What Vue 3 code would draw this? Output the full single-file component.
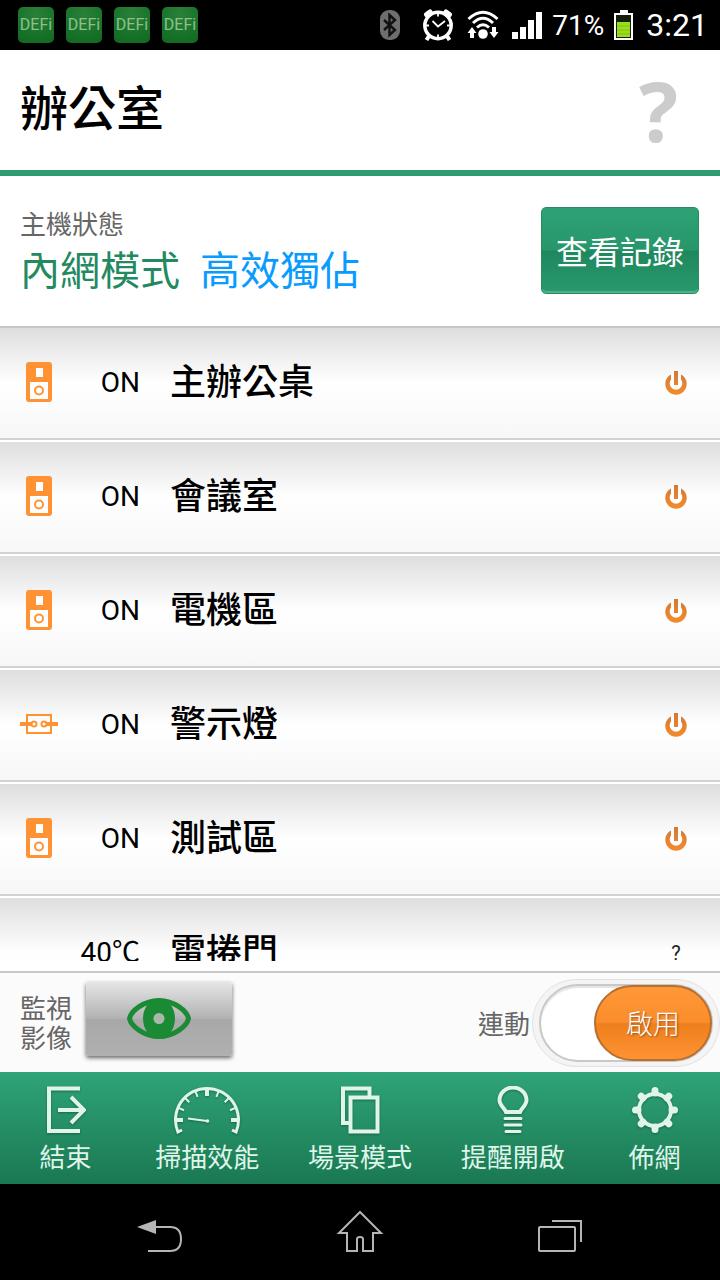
<template>
  <div class="screen">
    <div class="status-bar">
      <div class="notifications">
        <span v-for="n in 4" :key="n" class="app-badge">DEFi</span>
      </div>
      <div class="indicators">
        <svg class="bluetooth" width="20" height="30" viewBox="0 0 20 30">
          <rect width="20" height="30" rx="9" fill="#6e6e6e"/>
          <path d="M4 10L15 20 9.500 25V5L15 10 4 20" fill="none" stroke="#111" stroke-width="2.400"/>
        </svg>
        <svg class="alarm" width="32" height="32" viewBox="0 0 32 32">
          <g fill="none" stroke="#fff">
            <circle cx="16" cy="16.500" r="13.200" stroke-width="3.500"/>
            <path d="M4.500 5.500L8 3M24 3L27.500 5.500" stroke-width="5" stroke-linecap="round"/>
            <path d="M7 27L4.500 31M25 27L27.500 31" stroke-width="4"/>
            <path d="M10.500 12L16 17.500 23 12M16 3V7.500M16 25.500V29M3 16.500H7M25 16.500H29" stroke-width="1.800"/>
          </g>
        </svg>
        <svg class="wifi" width="32" height="30" viewBox="0 0 32 30">
          <g fill="none" stroke="#fff" stroke-width="3">
            <path d="M1.500 9Q16 -4.500 30.500 9"/>
            <path d="M6 13Q16 3.500 26 13"/>
            <path d="M10 17.500Q16 12 22 17.500"/>
          </g>
          <circle cx="16" cy="24" r="4.800" fill="#fff"/>
          <path d="M5 17L9.500 23H7V28H3V23H.5ZM27 28L22.500 22H25V17H29V22H31.500Z" fill="#fff"/>
        </svg>
        <svg class="signal" width="30" height="28" viewBox="0 0 30 28">
          <path d="M0 21H6V28H0ZM8 16H14V28H8ZM16 9H22V28H16ZM24 1H30V28H24Z" fill="#fff"/>
        </svg>
        <span class="percent">71%</span>
        <svg class="battery" width="20" height="30" viewBox="0 0 20 30">
          <path d="M6 0H14V3H19V30H0V3H6Z" fill="#fff"/>
          <rect x="2" y="5" width="15" height="23" fill="#15200a"/>
          <rect x="3" y="12" width="13" height="15" fill="#9bdc1c"/>
          <path d="M3 16H16M3 20H16M3 24H16" stroke="#84bd18"/>
        </svg>
        <span class="clock">3:21</span>
      </div>
    </div>

    <header class="title-bar">
      <h1>辦公室</h1>
      <button type="button" class="help">?</button>
    </header>

    <section class="host">
      <div class="host-info">
        <p class="host-label">主機狀態</p>
        <p class="host-modes">
          <span class="mode-network">內網模式</span>
          <span class="mode-power">高效獨佔</span>
        </p>
      </div>
      <button type="button" class="log-button">查看記錄</button>
    </section>

    <ul class="devices">
      <li v-for="device in devices" :key="device.name" class="device">
        <span class="device-icon">
          <svg v-if="device.type === 'outlet'" width="38" height="42" viewBox="0 0 38 42">
            <rect x="6" width="26" height="40" rx="3" fill="#ff9233"/>
            <path d="M16 6H23V15H16ZM10 20H28V37H10Z" fill="#fff"/>
            <circle cx="19" cy="28.500" r="4" fill="none" stroke="#ff9233" stroke-width="2"/>
          </svg>
          <svg v-else-if="device.type === 'relay'" width="38" height="42" viewBox="0 0 38 42">
            <g fill="none" stroke="#ff9233" stroke-width="2">
              <rect x="7" y="11" width="24" height="18"/>
              <circle cx="14" cy="20" r="2.500"/>
              <circle cx="24" cy="20" r="2.500"/>
              <path d="M0 20H12M26 20H38" stroke-width="4"/>
            </g>
          </svg>
        </span>
        <span class="device-state">{{ device.state }}</span>
        <span class="device-name">{{ device.name }}</span>
        <button type="button" class="power" :aria-label="device.type ? device.name : null">
          <svg v-if="device.type" width="22" height="24" viewBox="0 0 22 24">
            <defs>
              <linearGradient id="power-fill" x1="0" y1="0" x2="0" y2="1">
                <stop offset="0" stop-color="#d07a35"/>
                <stop offset="1" stop-color="#f58a2c"/>
              </linearGradient>
            </defs>
            <path
                d="M6 3.500A10.700 10.700 0 1 0 16 3.500V8.500A6.300 6.300 0 1 1 6 8.500ZM9 0H13V14H9Z"
                fill="url(#power-fill)"/>
          </svg>
          <template v-else>?</template>
        </button>
      </li>
    </ul>

    <section class="controls">
      <span id="camera-label" class="camera-label">監視<br>影像</span>
      <button type="button" class="camera-button" aria-labelledby="camera-label">
        <svg width="64" height="42" viewBox="0 0 64 42">
          <path
              d="M2.500 20.500C4 13 17 2.500 32 2.500S60 13 61.500 20.500C60 28 47 38.500 32 38.500S4 28 2.500 20.500Z"
              fill="none"
              stroke="#1a8a35"
              stroke-width="5"/>
          <ellipse cx="32" cy="20.500" rx="16" ry="20" fill="#1a8a35"/>
          <circle cx="32" cy="20.500" r="5.500" fill="#a9b8ab"/>
        </svg>
      </button>
      <label class="link-switch">
        <span>連動</span>
        <span class="track" :class="{ on: linked }">
          <input v-model="linked" type="checkbox">
          <span class="thumb">啟用</span>
        </span>
      </label>
    </section>

    <nav class="tabs">
      <button type="button" class="tab">
        <svg width="42" height="48" viewBox="0 0 42 48">
          <path d="M36 2.500H5V45H36M14 24H40M27 11L40 24 27 37" stroke-width="4"/>
        </svg>
        <span>結束</span>
      </button>
      <button type="button" class="tab">
        <svg width="68" height="48" viewBox="0 0 68 48">
          <path d="M9 44L4.900 46A31.500 31.500 0 1 1 63.100 46L59 44"/>
          <path
              v-for="tick in ticks"
              :key="tick.angle"
              :d="tick.major ? 'M34 3V10' : 'M34 3V9'"
              :transform="`rotate(${tick.angle} 34 34)`"
              :stroke-width="tick.major ? 4 : 2"/>
          <path d="M15 32.500L34 35" stroke-width="2"/>
          <circle cx="34.500" cy="35" r="1.800" fill="#dff5ea" stroke="none"/>
        </svg>
        <span>掃描效能</span>
      </button>
      <button type="button" class="tab">
        <svg width="40" height="48" viewBox="0 0 40 48">
          <path d="M10 37H3V2.500H29.500V10M10.500 11.500H37.500V45.500H10.500Z" stroke-width="4"/>
        </svg>
        <span>場景模式</span>
      </button>
      <button type="button" class="tab">
        <svg width="32" height="48" viewBox="0 0 32 48">
          <path d="M9 26H23C24.500 22 29.500 19.500 29.500 14A13.500 12.500 0 0 0 2.500 14C2.500 19.500 7.500 22 9 26Z" stroke-width="4"/>
          <path d="M8 32.500H24M8 39H24M9 45.500H23" stroke-linecap="round"/>
        </svg>
        <span>提醒開啟</span>
      </button>
      <button type="button" class="tab">
        <svg width="48" height="48" viewBox="0 0 48 48">
          <circle cx="24" cy="24" r="16" stroke-width="4"/>
          <path
              v-for="n in 8"
              :key="n"
              d="M24 7V4.500"
              stroke-width="7"
              stroke-linecap="round"
              :transform="`rotate(${n * 45} 24 24)`"/>
        </svg>
        <span>佈網</span>
      </button>
    </nav>

    <nav class="system-nav">
      <button type="button" aria-label="返回">
        <svg width="48" height="48" viewBox="0 0 48 48">
          <path d="M1 19L20 12V26Z" fill="#b5b5b5" stroke="none"/>
          <path d="M19 19H34Q45 19 45 31T34 43H12"/>
        </svg>
      </button>
      <button type="button" aria-label="主畫面">
        <svg width="48" height="48" viewBox="0 0 48 48">
          <path d="M24 4L45 25H37V43H27V31Q27 29 24 29T21 31V43H11V25H3Z"/>
        </svg>
      </button>
      <button type="button" aria-label="最近使用">
        <svg width="48" height="48" viewBox="0 0 48 48">
          <rect x="3" y="19" width="36" height="24" rx="1"/>
          <path d="M16 13H45V34"/>
        </svg>
      </button>
    </nav>
  </div>
</template>


<script setup>

import { ref } from 'vue';

const linked = ref(true);

const devices = [
  { type: 'outlet', state: 'ON', name: '主辦公桌' },
  { type: 'outlet', state: 'ON', name: '會議室' },
  { type: 'outlet', state: 'ON', name: '電機區' },
  { type: 'relay', state: 'ON', name: '警示燈' },
  { type: 'outlet', state: 'ON', name: '測試區' },
  { type: null, state: '40℃', name: '電捲門' }
];

// gauge marks, in degrees from the top
const ticks = [-90, -67, -45, -22, 0, 22, 45, 67, 90].map((angle) => ({
  angle,
  major: angle % 90 === 0
}));

</script>

<style>

body {
  margin: 0;
  background: #000;
}

</style>

<style scoped>

.screen {
  display: flex;
  flex-direction: column;
  height: 100vh;
  background: #fff;
  color: #000;
  font-family: "Roboto", "Noto Sans CJK TC", sans-serif;
}

button {
  margin: 0;
  padding: 0;
  border: 0;
  background: none;
  font-family: inherit;
  cursor: pointer;
}

svg {
  display: block;
  flex: none;
}

h1, p, ul {
  margin: 0;
  padding: 0;
}

.status-bar {
  display: flex;
  justify-content: space-between;
  align-items: center;
  flex: none;
  height: 50px;
  padding: 0 12px 0 18px;
  background: #000;
  color: #fff;
}

.notifications {
  display: flex;
  gap: 12px;
}

.app-badge {
  width: 36px;
  border-radius: 5px;
  background: radial-gradient(circle at 50% 20%, #2a8038, #0d6a20);
  color: #8fc08f;
  font-size: 16px;
  line-height: 36px;
  text-align: center;
}

.indicators {
  display: flex;
  align-items: center;
}

.alarm {
  margin-left: 22px;
}

.wifi {
  margin-left: 13px;
}

.signal {
  margin-left: 13px;
}

.percent {
  margin-left: 10px;
  font-size: 28px;
}

.battery {
  margin-left: 10px;
}

.clock {
  margin-left: 12px;
  font-size: 32px;
}

.title-bar {
  display: flex;
  justify-content: space-between;
  align-items: center;
  flex: none;
  height: 120px;
  padding: 0 42px 0 20px;
  border-bottom: 6px solid #2c9c70;
}

h1 {
  font-size: 48px;
  font-weight: 500;
  line-height: 60px;
}

.help {
  color: #ccc;
  font-family: "Open Sans", sans-serif;
  font-size: 82px;
  font-weight: 700;
  line-height: 118px;
}

.host {
  display: flex;
  justify-content: space-between;
  align-items: center;
  box-sizing: border-box;
  flex: none;
  height: 150px;
  padding: 0 21px 2px 20px;
}

.host-info {
  padding-top: 4px;
}

.host-label {
  color: #666;
  font-size: 26px;
  line-height: 40px;
}

.host-modes {
  display: flex;
  gap: 20px;
  font-size: 40px;
  line-height: 54px;
}

.mode-network {
  color: #23895f;
}

.mode-power {
  color: #0a9bff;
}

.log-button {
  height: 87px;
  padding: 0 14px;
  border: 1px solid #2a8b63;
  border-radius: 5px;
  background: linear-gradient(#2ea276, #27966b 49%, #1f875e 51%, #29996d);
  box-shadow: inset 0 -3px 1px -1px #4fb38b;
  color: #fff;
  font-size: 32px;
}

.devices {
  flex: 1;
  min-height: 0;
  margin-bottom: 10px;
  border-top: 2px solid #c8c8c8;
  list-style: none;
  overflow-y: auto;
  scrollbar-width: none;
}

.device {
  display: flex;
  align-items: center;
  height: 110px;
  padding: 0 20px;
  margin-bottom: 2px;
  border-bottom: 2px solid #d2d2d2;
  background: linear-gradient(#dedede, #fff 50%, #f7f7f7);
  line-height: 40px;
}

.device-icon {
  width: 38px;
}

.device-state {
  width: 82px;
  font-size: 28px;
  text-align: right;
}

.device-name {
  flex: 1;
  margin-left: 30px;
  font-size: 36px;
  font-weight: 500;
}

.power {
  display: flex;
  justify-content: center;
  align-items: center;
  width: 48px;
  height: 48px;
  color: #222;
  font-size: 20px;
}

.controls {
  display: flex;
  align-items: center;
  flex: none;
  height: 99px;
  padding-left: 20px;
  border-top: 2px solid #c8c8c8;
  background: #fbfbfb;
  color: #666;
  font-size: 26px;
}

.camera-label {
  padding-top: 2px;
  line-height: 30px;
}

.camera-button {
  display: flex;
  justify-content: center;
  align-items: center;
  width: 146px;
  height: 74px;
  margin: 0 auto 8px 14px;
  border-radius: 2px;
  background: linear-gradient(#e6e6e6, #b2b2b2 49%, #a8a8a8 51%, #b0b0b0);
  box-shadow: 0 2px 4px rgba(0, 0, 0, 0.6);
}

.link-switch {
  display: flex;
  align-items: center;
  gap: 2px;
}

.track {
  position: relative;
  display: flex;
  box-sizing: border-box;
  width: 188px;
  height: 88px;
  padding: 5px 7px;
  border: 1px solid #e2e2e2;
  border-radius: 44px;
  background: #f4f4f4;
}

.track::before {
  content: "";
  position: absolute;
  inset: 4px 6px;
  border: 2px solid #c8c8c8;
  border-radius: 40px;
  background: #fff;
  box-shadow: inset 0 2px 1px #e4e4e4;
}

.track.on {
  justify-content: flex-end;
}

.track input {
  position: absolute;
  inset: 0;
  z-index: 1;
  width: 100%;
  height: 100%;
  margin: 0;
  opacity: 0;
  cursor: pointer;
}

.thumb {
  position: relative;
  display: flex;
  justify-content: center;
  align-items: center;
  box-sizing: border-box;
  width: 118px;
  border: 2px solid #b8702f;
  border-radius: 40px;
  background: linear-gradient(#ff9838, #fb8d2b 49%, #ee7f1c 51%, #ff9233);
  color: #fff;
  font-size: 27px;
  font-weight: 300;
  text-shadow: 1px 1px 2px rgba(0, 0, 0, 0.4);
}

.tabs {
  display: grid;
  grid-template-columns: 6fr 7fr 7fr 7fr 6fr;
  flex: none;
  height: 112px;
  background: linear-gradient(#2fa478, #1a7852);
}

.tab {
  display: flex;
  flex-direction: column;
  align-items: center;
  gap: 8px;
  padding-top: 14px;
  color: #dff5ea;
  font-size: 26px;
  line-height: 32px;
}

.tab svg {
  fill: none;
  stroke: #dff5ea;
  stroke-width: 3px;
  filter: drop-shadow(0 1px 1px rgba(0, 0, 0, 0.3));
}

.system-nav {
  display: grid;
  grid-template-columns: repeat(3, 1fr);
  flex: none;
  height: 96px;
  padding: 0 60px;
  background: #000;
}

.system-nav button {
  display: flex;
  justify-content: center;
  align-items: center;
}

.system-nav svg {
  fill: none;
  stroke: #b5b5b5;
  stroke-width: 2px;
}

</style>
